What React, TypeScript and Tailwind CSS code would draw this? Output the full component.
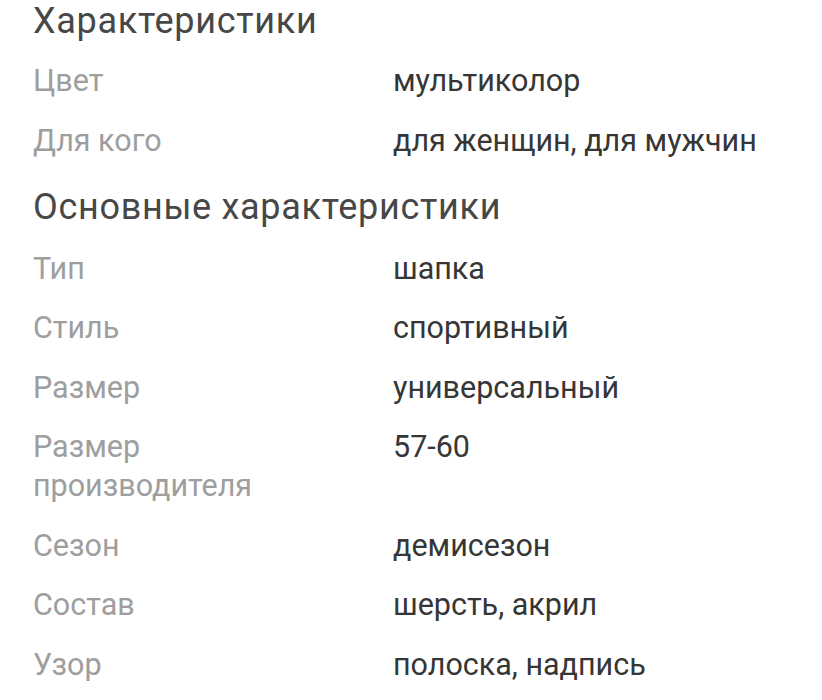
import React from "react";

type Row = { label: string; value: string };

const sec1: Row[] = [
  { label: "Цвет", value: "мультиколор" },
  { label: "Для кого", value: "для женщин, для мужчин" },
];

const sec2: Row[] = [
  { label: "Тип", value: "шапка" },
  { label: "Стиль", value: "спортивный" },
  { label: "Размер", value: "универсальный" },
  { label: "Размер производителя", value: "57-60" },
  { label: "Сезон", value: "демисезон" },
  { label: "Состав", value: "шерсть, акрил" },
  { label: "Узор", value: "полоска, надпись" },
];

function Rows({ rows }: { rows: Row[] }) {
  return (
    <div className="flex flex-col gap-[20.5px]">
      {rows.map((r) => (
        <div key={r.label} className="grid grid-cols-[300px_1fr] gap-x-[60px] text-[30.5px] leading-[39px]">
          <div className="text-[#9e9e9e]">{r.label}</div>
          <div className="text-[#363636]">{r.value}</div>
        </div>
      ))}
    </div>
  );
}

export default function App() {
  return (
    <div className="w-[822px] h-[700px] overflow-hidden bg-white px-[33px] pt-[1px] font-['Roboto',sans-serif]">
      <h2 className="text-[36px] leading-[40px] tracking-[0.7px] text-[#474747]">Характеристики</h2>
      <div className="mt-[20px]">
        <Rows rows={sec1} />
      </div>
      <h2 className="mt-[27px] text-[36px] leading-[40px] tracking-[0.7px] text-[#474747]">Основные характеристики</h2>
      <div className="mt-[22px]">
        <Rows rows={sec2} />
      </div>
    </div>
  );
}
